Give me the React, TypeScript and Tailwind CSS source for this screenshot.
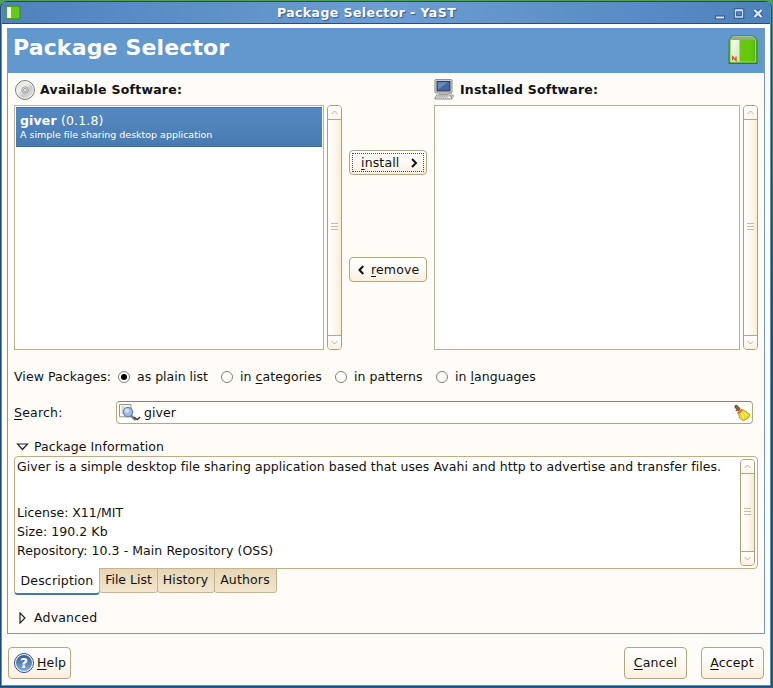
import type { ReactNode } from "react";

const U = ({ children }: { children: ReactNode }) => (
  <span className="underline decoration-1 underline-offset-2">{children}</span>
);

function ScrollBar() {
  return (
    <div className="flex h-full w-[15px] shrink-0 flex-col items-center rounded-[4px] border border-[#aa9f76] bg-linear-to-r from-white via-[#fff8f2] to-[#f8ecd3]">
      <div className="flex h-[14px] w-full shrink-0 items-center justify-center rounded-t-[3px] border-b border-[#b5a77e] bg-linear-to-b from-white to-[#fff5ec]">
        <svg width="7" height="5" viewBox="0 0 7 5" fill="none" stroke="#bdb19a"><path d="M.5 4 3.5 1l3 3" /></svg>
      </div>
      <div className="flex w-full flex-1 flex-col items-center justify-center gap-[2px] pb-[2px]">
        {[0, 1, 2].map((i) => <div key={i} className="h-px w-[7px] bg-[#c9bda0]" />)}
      </div>
      <div className="flex h-[14px] w-full shrink-0 items-center justify-center rounded-b-[3px] border-t border-[#b5a77e] bg-linear-to-b from-white to-[#fff0e6]">
        <svg width="7" height="5" viewBox="0 0 7 5" fill="none" stroke="#bdb19a"><path d="M.5 1l3 3 3-3" /></svg>
      </div>
    </div>
  );
}

function Button({ className, children }: { className: string; children: ReactNode }) {
  return (
    <button className={"flex items-center rounded-[4px] border border-[#b3a57e] bg-linear-to-b from-white via-[#fff8f3] to-[#fbefdf] tracking-[0.15px] whitespace-nowrap " + className}>
      {children}
    </button>
  );
}

function Radio({ checked, className, children }: { checked?: boolean; className: string; children: ReactNode }) {
  return (
    <label className={"flex shrink-0 items-center whitespace-nowrap " + className}>
      <span className="mr-[7px] flex size-3 shrink-0 items-center justify-center rounded-full border border-[#8e7b70] bg-white">
        {checked && <span className="size-[6px] rounded-full bg-black" />}
      </span>
      <span>{children}</span>
    </label>
  );
}

function DiscIcon() {
  return (
    <svg width="20" height="20" viewBox="0 0 20 20">
      <defs>
        <linearGradient id="disc" x1="0" y1="0" x2="1" y2="1">
          <stop offset="0" stopColor="#c4c4c4" /><stop offset=".35" stopColor="#f1f1f1" />
          <stop offset=".6" stopColor="#c9c9c9" /><stop offset="1" stopColor="#eee" />
        </linearGradient>
      </defs>
      <circle cx="10" cy="10" r="9.4" fill="url(#disc)" stroke="#6d6b6a" />
      <circle cx="10" cy="10" r="8.4" fill="none" stroke="#fafafa" strokeWidth=".8" />
      <circle cx="10" cy="10" r="3.2" fill="#e2e2e2" stroke="#8f8f8f" strokeWidth=".8" />
      <circle cx="10" cy="10" r="1.5" fill="#fff" stroke="#777" strokeWidth=".7" />
    </svg>
  );
}

function ComputerIcon() {
  return (
    <svg width="20" height="21" viewBox="0 0 20 21">
      <rect x="1" y=".6" width="17" height="13.4" rx="1" fill="#e4e4df" stroke="#85857f" />
      <rect x="3" y="2.4" width="13" height="9.6" fill="#42689f" stroke="#24375c" />
      <path d="M3.8 3.2h10L4 10.5z" fill="#6589bd" />
      <path d="M5 14.5h9v2H5z" fill="#b2b3ae" />
      <path d="M2.7 16h13.5l1.8 4H.7z" fill="#eeeeeb" stroke="#888983" />
      <path d="M3.5 17.5h11M2.8 18.8h11" stroke="#999" strokeWidth=".8" strokeDasharray="1.5 .5" />
      <path d="M14.5 14.5q4-.5 3.5 1.5M17 17l2.4-1v2l-1.6.7z" fill="#ddd" stroke="#888" strokeWidth=".7" />
    </svg>
  );
}

function PackageIcon() {
  return (
    <svg width="30" height="30" viewBox="0 0 30 30">
      <defs>
        <linearGradient id="green" x1="0" x2="1"><stop stopColor="#67c90c" /><stop offset=".7" stopColor="#64c812" /><stop offset="1" stopColor="#58b818" /></linearGradient>
        <linearGradient id="side" x1="0" y1="0" x2="1" y2="1"><stop stopColor="#fff" /><stop offset="1" stopColor="#c6e7b0" /></linearGradient>
      </defs>
      <path d="M.5 27.5h29v1.5H.5z" fill="#167b1f" />
      <path d="M4.5 1h21L29 5v23H1V5z" fill="#53b91e" stroke="#34861f" />
      <path d="M5 1.5h20L27.5 5h-25z" fill="#9a9f98" />
      <path d="M11.5 5h15.8v22H11.5z" fill="url(#green)" />
      <path d="M2.5 5h9v22h-9z" fill="url(#side)" />
      <path d="M2.5 5 5 1.7h20L27.6 5v22H2.5z" fill="none" stroke="#a6e270" strokeWidth=".8" />
      <path d="M11.5 5v22" stroke="#b2e86e" strokeDasharray="1 1" />
      <path d="M4.5 25.5v-4l3.5 4v-4" fill="none" stroke="#d54820" strokeWidth="1.2" />
    </svg>
  );
}

function SearchIcon() {
  return (
    <svg width="23" height="17" viewBox="0 0 23 17" fill="none">
      <path d="M.5.5H12v12.3H.5z" fill="#f7f7f7" stroke="#9193a0" />
      <path d="M2.5 3h3M2.5 5h2M2.5 7h2M2.5 9h2" stroke="#bbb" />
      <path d="m12 11.5 3.8 3.8" stroke="#777" strokeWidth="2.4" strokeLinecap="round" />
      <circle cx="9" cy="8" r="4.7" fill="#9bbce7" stroke="#7183a1" strokeWidth="1.2" />
      <circle cx="8" cy="6.8" r="2.3" fill="#c8dcf6" />
      <path d="m15 13 3.2 2.6 3-2.6" stroke="#333" strokeWidth="1.3" />
    </svg>
  );
}

function BroomIcon() {
  return (
    <svg width="18" height="18" viewBox="0 0 18 18">
      <path d="m3.2 2.6 2.2 2.6" stroke="#5e5128" strokeWidth="3.6" strokeLinecap="round" />
      <path d="m3 2.1 2 2.4" stroke="#8f8040" strokeWidth="1.2" />
      <path d="M9.5 5.5 13 7.5l4 3.5q-1.3 4-6.2 5.6-2.6-.6-4.2-2.4L5.6 10z" fill="#e9dc2c" stroke="#a8891a" strokeWidth=".8" />
      <path d="m9 9.5 1.6 5M10.8 8.6l3.5 3" stroke="#fff88c" />
      <path d="M2.8 6.8 7.2 4" stroke="#b5582f" strokeWidth="1.6" />
      <path d="m4.6 9.6 4.6-4" stroke="#d97a3a" strokeWidth="2.2" />
    </svg>
  );
}

function HelpIcon() {
  return (
    <div className="flex size-5 items-center justify-center rounded-full border border-[#274c80] bg-white p-px">
      <div className="flex size-4 items-center justify-center rounded-full bg-linear-to-b from-[#335b96] to-[#82addc] text-[14px] leading-none font-bold tracking-normal text-white">?</div>
    </div>
  );
}

export default function App() {
  return (
    <div className="h-[688px] w-[773px] overflow-hidden bg-[#35644d] bg-linear-to-b from-[#4ba34f] via-[#1b604e] to-[#35644d] pt-px font-['DejaVu_Sans',sans-serif] text-[12.5px] leading-[19px] tracking-[0.064px] text-[#111]">
      <div className="flex h-[686px] w-[772px] flex-col rounded-t-[7px] border border-[#1e4773] bg-[#5c92cc] px-px pb-px">
        <header className="flex h-[22px] shrink-0 items-center border-b border-[#274c7d] bg-linear-to-r from-[#4f82bb] via-[#6c9dd4] to-[#4f82bb]">
          <svg className="ml-1 shrink-0" width="15" height="15" viewBox="0 0 15 15">
            <path d="M1 1h12l1 2v11H0V3z" fill="#58bb19" stroke="#397e30" strokeWidth=".7" />
            <path d="M1 2h4v11H1z" fill="#f4f7e9" /><path d="M5 2h8v11H5z" fill="#65cb13" />
          </svg>
          <h1 className="flex-1 pr-px text-center text-[12.5px] font-bold tracking-[0.43px] text-white [text-shadow:1px_1px_1px_#315b8d]">Package Selector - YaST</h1>
          <svg className="mr-[7px] shrink-0" width="50" height="14" viewBox="0 0 50 14" fill="none">
            <path d="M2 11.5h10" stroke="#31588a" strokeWidth="4" /><path d="M3 11.5h8" stroke="#d3e5fb" strokeWidth="2" />
            <path d="M22.5 4h7v7h-7z" stroke="#31588a" strokeWidth="3.4" /><path d="M22.5 4h7v7h-7zM22.5 4.5h7" stroke="#cde0f8" strokeWidth="1.3" />
            <path d="m41.5 4 7 7m0-7-7 7" stroke="#31588a" strokeWidth="4" /><path d="m41.5 4 7 7m0-7-7 7" stroke="#e0edfc" strokeWidth="2.3" />
          </svg>
        </header>
        <div className="flex flex-1 flex-col bg-[#fffcf7] px-[5px]">
          <div className="-mx-[5px] h-1 shrink-0 bg-white" />
          <main className="flex h-[606px] w-[758px] shrink-0 flex-col border border-t-0 border-[#7298bd]">
            <div className="flex h-[45px] shrink-0 items-center justify-between bg-[#6198cd] pr-[6px] pl-[5px]">
              <h2 className="-mt-[5px] text-[22px] leading-none font-bold tracking-[0.15px] whitespace-nowrap text-white">Package Selector</h2>
              <span className="-mt-[2px] flex"><PackageIcon /></span>
            </div>
            <div className="flex flex-1 flex-col pr-[6px] pl-[6px]">
              <div className="flex h-8 shrink-0 font-bold tracking-[0.25px]">
                <div className="flex w-[420px] items-center pt-[1px]"><span className="ml-px flex"><DiscIcon /></span><span className="ml-[5px]">Available Software:</span></div>
                <div className="flex items-center pt-[1px]"><ComputerIcon /><span className="ml-[6px] tracking-[0.2px]">Installed Software:</span></div>
              </div>
              <section className="flex h-[245px] shrink-0">
                <div className="w-[310px] shrink-0 border border-[#beb08a] bg-white p-px">
                  <div className="h-[40px] border-t border-b border-t-[#3e6fa8] border-b-[#3c6ba0] bg-linear-to-b from-[#5689c1] to-[#467bb2] px-[4px] pt-[4px] text-white">
                    <div className="leading-[18px] tracking-[0.15px]"><b>giver</b> (0.1.8)</div>
                    <div className="text-[9.5px] leading-[10px] tracking-[-0.02px]">A simple file sharing desktop application</div>
                  </div>
                </div>
                <div className="ml-[3px]"><ScrollBar /></div>
                <div className="ml-[7px] flex w-[78px] shrink-0 flex-col pt-[45px]">
                  <Button className="h-[25px] p-[2px]">
                    <span className="flex h-full w-full items-center border border-dotted border-[#544841] pl-[8px]">
                      <span><U>i</U>nstall</span>
                      <svg className="ml-[12px]" width="7" height="10" viewBox="0 0 7 10" fill="none" stroke="#111" strokeWidth="2"><path d="m1 1 4 4-4 4" /></svg>
                    </span>
                  </Button>
                  <Button className="mt-[82px] h-[25px] pl-[8px]">
                    <svg className="mr-[7px]" width="6" height="10" viewBox="0 0 6 10" fill="none" stroke="#111" strokeWidth="2"><path d="M5.2 1 1.5 5l3.7 4" /></svg>
                    <span><U>r</U>emove</span>
                  </Button>
                </div>
                <div className="mr-[3px] ml-[7px] w-[306px] shrink-0 border border-[#beb08a] bg-white" />
                <ScrollBar />
              </section>
              <div className="flex h-[51px] shrink-0 items-center pt-[2px]">
                <span className="w-[104px] shrink-0 whitespace-nowrap">View Packages:</span>
                <Radio checked className="w-[103px] tracking-normal">as plain list</Radio>
                <Radio className="w-[114px]">in <U>c</U>ategories</Radio>
                <Radio className="w-[101px]">in patterns</Radio>
                <Radio className="w-[110px]">in <U>l</U>anguages</Radio>
              </div>
              <div className="flex h-[23px] shrink-0 items-center">
                <span className="w-[102px] shrink-0 tracking-[0.2px]"><U>S</U>earch:</span>
                <div className="flex h-full w-[637px] items-center rounded-[4px] border border-t-[#96834f] border-r-[#b5a77e] border-b-[#b5a77e] border-l-[#b5a77e] bg-white pr-[1px] pl-[2px]">
                  <SearchIcon /><span className="ml-[2px] flex-1">giver</span><BroomIcon />
                </div>
              </div>
              <div className="flex h-8 shrink-0 items-center pt-[13px] pl-[2px]">
                <svg width="13" height="8" viewBox="0 0 13 8" fill="white" stroke="#222" strokeWidth="1.2"><path d="M1.5 1h10l-5 5.5z" /></svg>
                <span className="ml-[5px] tracking-[0.1px]">Package Information</span>
              </div>
              <section className="flex h-[113px] w-[744px] shrink-0 rounded-t-[4px] rounded-br-[4px] border border-[#c2ad80] bg-white py-[2px] pr-[2px] pl-[2px]">
                <div className="-mt-[2px] flex-1 whitespace-nowrap">
                  <p>Giver is a simple desktop file sharing application based that uses Avahi and http to advertise and transfer files.</p>
                  <p className="mt-[27px] tracking-normal">License: X11/MIT</p>
                  <p>Size: 190.2 Kb</p>
                  <p>Repository: 10.3 - Main Repository (OSS)</p>
                </div>
                <ScrollBar />
              </section>
              <nav className="-mt-px flex h-[27px] shrink-0 items-start tracking-[0.15px] whitespace-nowrap">
                <span className="flex h-[27px] w-[86px] items-center justify-center rounded-b-[4px] border border-t-0 border-r-[#bca983] border-b-2 border-b-[#3e78b5] border-l-[#c2ad80] bg-white">Description</span>
                <span className="-ml-px flex h-[25px] w-[59px] items-center justify-center rounded-b-[3px] border border-[#c5b48e] bg-linear-to-b from-[#e7d6b5] to-[#f1e5cf] pb-[2px] tracking-normal">File List</span>
                <span className="-ml-px flex h-[25px] w-[58px] items-center justify-center rounded-b-[3px] border border-[#c5b48e] bg-linear-to-b from-[#e7d6b5] to-[#f1e5cf] pr-px pb-[2px]">History</span>
                <span className="-ml-px flex h-[25px] w-[63px] items-center justify-center rounded-b-[3px] border border-[#c5b48e] bg-linear-to-b from-[#e7d6b5] to-[#f1e5cf] pr-px pb-[2px]">Authors</span>
              </nav>
              <div className="flex flex-1 items-center pt-[7px] pl-[5px]">
                <svg width="8" height="12" viewBox="0 0 8 12" fill="white" stroke="#222" strokeWidth="1.2"><path d="M1 1v10l5-5z" /></svg>
                <span className="ml-[7px] tracking-[0.2px]">Advanced</span>
              </div>
            </div>
          </main>
          <footer className="flex pt-[13px] pl-px">
            <Button className="h-8 w-[63px] pb-px pl-[5px]"><HelpIcon /><span className="ml-[3px]"><U>H</U>elp</span></Button>
            <Button className="ml-[553px] h-8 w-[63px] justify-center pb-px"><span><U>C</U>ancel</span></Button>
            <Button className="ml-[14px] h-8 w-[63px] justify-center pr-px pb-px"><span><U>A</U>ccept</span></Button>
          </footer>
        </div>
      </div>
    </div>
  );
}
